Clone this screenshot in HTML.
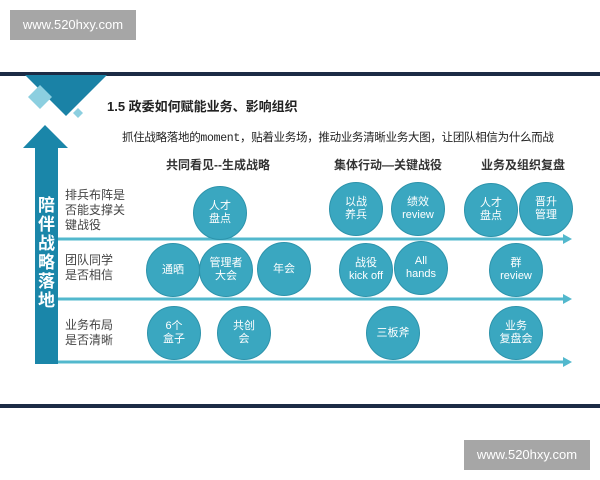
<!DOCTYPE html>
<html><head><meta charset="utf-8"><style>
*{margin:0;padding:0;box-sizing:border-box}
body{width:600px;height:480px;background:#fff;position:relative;overflow:hidden;font-family:"Liberation Sans","Noto Sans CJK SC",sans-serif}
.a{position:absolute}
.wm{position:absolute;background:#a6a6a6;color:#fff;font-size:13px;text-align:center;line-height:30px;width:126px;height:30px}
.c{position:absolute;width:54px;height:54px;border-radius:50%;background:#3aa7c0;border:1px solid #2d93ab;color:#fff;font-size:11px;line-height:13px;display:flex;align-items:center;justify-content:center;text-align:center;transform:translate(-27px,-27px)}
.h{position:absolute;font-size:12px;font-weight:bold;color:#333;transform:translateX(-50%);white-space:nowrap}
.lb{position:absolute;left:65px;font-size:12px;color:#444;line-height:15px}
</style></head><body>
<div class="wm" style="left:10px;top:10px">www.520hxy.com</div>
<div class="wm" style="left:464px;top:440px">www.520hxy.com</div>
<div class="a" style="left:0;top:72px;width:600px;height:4px;background:#1c2b45"></div>
<div class="a" style="left:0;top:404px;width:600px;height:4px;background:#1c2b45"></div>
<svg class="a" style="left:0;top:0" width="600" height="480">
<polygon points="25,75 107,75 66,116" fill="#1a82a6"/>
<polygon points="40,85 52,97 40,109 28,97" fill="#8ccfe0"/>
<polygon points="78,108 83,113 78,118 73,113" fill="#8ccfe0"/>
<polygon points="45,125 68,148 58,148 58,364 35,364 35,148 23,148" fill="#1a86a9"/>
<g stroke="#52b8cd" stroke-width="3" fill="#52b8cd">
<line x1="58" y1="239" x2="565" y2="239"/><polygon points="572,239 563,234 563,244" stroke="none"/>
<line x1="58" y1="299" x2="565" y2="299"/><polygon points="572,299 563,294 563,304" stroke="none"/>
<line x1="58" y1="362" x2="565" y2="362"/><polygon points="572,362 563,357 563,367" stroke="none"/>
</g>
</svg>
<div class="a" style="left:37px;top:196px;width:19px;color:#fff;font-weight:bold;font-size:17px;line-height:19px;text-align:center">陪伴战略落地</div>
<div class="a" style="left:107px;top:96px;font-size:13px;font-weight:bold;color:#222">1.5 政委如何赋能业务、影响组织</div>
<div class="a" style="left:122px;top:129px;font-size:11.5px;color:#222;white-space:nowrap;letter-spacing:-0.3px">抓住战略落地的<span style="font-family:'Liberation Mono',monospace">moment</span>，贴着业务场，推动业务清晰业务大图，让团队相信为什么而战</div>
<div class="h" style="left:218px;top:156px">共同看见--生成战略</div>
<div class="h" style="left:388px;top:156px">集体行动—关键战役</div>
<div class="h" style="left:523px;top:156px">业务及组织复盘</div>
<div class="lb" style="top:188px">排兵布阵是<br>否能支撑关<br>键战役</div>
<div class="lb" style="top:253px">团队同学<br>是否相信</div>
<div class="lb" style="top:318px">业务布局<br>是否清晰</div>
<div class="c" style="left:220px;top:213px">人才<br>盘点</div>
<div class="c" style="left:356px;top:209px">以战<br>养兵</div>
<div class="c" style="left:418px;top:209px">绩效<br>review</div>
<div class="c" style="left:491px;top:210px">人才<br>盘点</div>
<div class="c" style="left:546px;top:209px">晋升<br>管理</div>
<div class="c" style="left:173px;top:270px">通晒</div>
<div class="c" style="left:226px;top:270px">管理者<br>大会</div>
<div class="c" style="left:284px;top:269px">年会</div>
<div class="c" style="left:366px;top:270px">战役<br>kick off</div>
<div class="c" style="left:421px;top:268px">All<br>hands</div>
<div class="c" style="left:516px;top:270px">群<br>review</div>
<div class="c" style="left:174px;top:333px">6个<br>盒子</div>
<div class="c" style="left:244px;top:333px">共创<br>会</div>
<div class="c" style="left:393px;top:333px">三板斧</div>
<div class="c" style="left:516px;top:333px">业务<br>复盘会</div>
</body></html>
